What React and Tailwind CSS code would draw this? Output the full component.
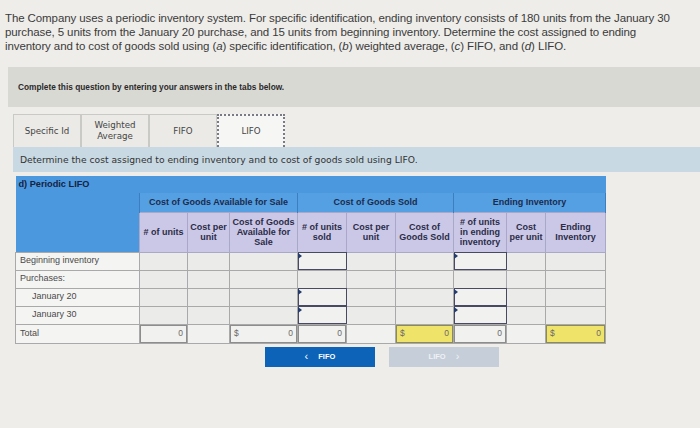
import React from "react";

const COLS = [124, 48, 42, 68, 49, 49, 58, 53, 39, 60];

const ROWS = [
  { label: "Beginning inventory", indent: false, inputs: true },
  { label: "Purchases:", indent: false, inputs: false },
  { label: "January 20", indent: true, inputs: true },
  { label: "January 30", indent: true, inputs: true },
];

const TABS = ["Specific Id", "Weighted Average", "FIFO", "LIFO"];

const SUBHEADS = [
  "# of units",
  "Cost per unit",
  "Cost of Goods Available for Sale",
  "# of units sold",
  "Cost per unit",
  "Cost of Goods Sold",
  "# of units in ending inventory",
  "Cost per unit",
  "Ending Inventory",
];

function Marker() {
  return (
    <span className="absolute left-0 top-0 w-0 h-0 border-t-[3px] border-b-[3px] border-l-[4px] border-t-transparent border-b-transparent border-l-[#233a6b]" />
  );
}

function Cell({ input }) {
  return (
    <td className={`relative h-[18px] p-0 border border-[#a9a9a9] ${input ? "bg-[#f1f1ef] outline outline-1 outline-[#474a62] -outline-offset-1" : "bg-[#ebebe9]"}`}>
      {input && <Marker />}
    </td>
  );
}

function TotalCell({ dollar, value, yellow, boxed = true }) {
  return (
    <td className={`h-[19px] p-0 border border-[#a9a9a9] ${yellow ? "bg-[#efe36a]" : "bg-[#f1f1ef]"}`}>
      {boxed && (
        <div className={`flex h-full items-center justify-between px-[4px] text-[8.5px] text-[#6a6a6a] outline outline-1 -outline-offset-1 ${yellow ? "outline-[#8a8a5a]" : "outline-[#8d8d8d]"}`}>
          <span>{dollar ? "$" : ""}</span>
          <span>{value}</span>
        </div>
      )}
    </td>
  );
}

export default function App() {
  return (
    <div className="w-[700px] h-[428px] overflow-hidden bg-[#eeede9] font-['Liberation_Sans',Arial,sans-serif]">
      <p className="pl-[5px] pt-[11px] text-[11.5px] leading-[14px] tracking-[-0.1px] text-[#3b3b3b]">
        The Company uses a periodic inventory system. For specific identification, ending inventory consists of 180 units from the January 30
        <br />
        purchase, 5 units from the January 20 purchase, and 15 units from beginning inventory. Determine the cost assigned to ending
        <br />
        inventory and to cost of goods sold using (<i>a</i>) specific identification, (<i>b</i>) weighted average, (<i>c</i>) FIFO, and (<i>d</i>) LIFO.
      </p>

      <div className="ml-[8px] mt-[14px] h-[40px] bg-[#d9d9d3] flex items-center pl-[10px]">
        <span className="text-[8.3px] font-bold text-[#2a2a2a]">
          Complete this question by entering your answers in the tabs below.
        </span>
      </div>

      <div className="ml-[13px] mt-[7px] flex h-[33px] font-['DejaVu_Sans',sans-serif] text-[8.7px] text-[#454545]">
        {TABS.map((t, i) => {
          const active = i === 3;
          return (
            <div
              key={t}
              className={`w-[68px] flex items-center justify-center text-center leading-[11px] ${
                active
                  ? "bg-[#f6f6f4] border-2 border-dotted border-[#7a7a86] border-b-0"
                  : "bg-[#ebeae6] border border-[#c9c9c5] border-b-0"
              }`}
            >
              {t === "Weighted Average" ? (
                <span>
                  Weighted
                  <br />
                  Average
                </span>
              ) : (
                t
              )}
            </div>
          );
        })}
      </div>

      <div className="ml-[13px] h-[25px] bg-[#c8d9e3] flex items-center pl-[7px]">
        <span className="font-['DejaVu_Sans',sans-serif] text-[9.2px] text-[#333]">
          Determine the cost assigned to ending inventory and to cost of goods sold using LIFO.
        </span>
      </div>

      <table className="ml-[15px] mt-[4px] border-collapse table-fixed w-[590px]">
        <colgroup>
          {COLS.map((w, i) => (
            <col key={i} style={{ width: w }} />
          ))}
        </colgroup>
        <thead>
          <tr>
            <th colSpan={10} className="h-[17px] p-0 pl-[3px] text-left bg-[#4c98de] text-[#15233f] font-bold text-[9.2px]">
              d) Periodic LIFO
            </th>
          </tr>
          <tr className="text-[#1c2b4d] font-bold text-[9px]">
            <th rowSpan={2} className="bg-[#4c98de] p-0" />
            <th colSpan={3} className="h-[19px] p-0 bg-[#55a0e2] border-x border-[#3b7fc0]">
              Cost of Goods Available for Sale
            </th>
            <th colSpan={3} className="p-0 bg-[#55a0e2] border-x border-[#3b7fc0]">
              Cost of Goods Sold
            </th>
            <th colSpan={3} className="p-0 bg-[#55a0e2] border-x border-[#3b7fc0]">
              Ending Inventory
            </th>
          </tr>
          <tr className="text-[#2c2c48] font-bold leading-[10px]">
            {SUBHEADS.map((h, i) => (
              <th key={i} className="h-[40px] p-0 px-[1px] bg-[#cac8e6] border border-[#a9a8c8] text-[9px]">
                {h}
              </th>
            ))}
          </tr>
        </thead>
        <tbody className="text-[#4a4a4a]">
          {ROWS.map((r) => (
            <tr key={r.label}>
              <td className={`h-[18px] p-0 border border-[#a9a9a9] bg-[#f4f4f2] text-[9px] ${r.indent ? "pl-[16px]" : "pl-[4px]"}`}>
                {r.label}
              </td>
              <Cell />
              <Cell />
              <Cell />
              <Cell input={r.inputs} />
              <Cell />
              <Cell />
              <Cell input={r.inputs} />
              <Cell />
              <Cell />
            </tr>
          ))}
          <tr>
            <td className="h-[19px] p-0 pl-[4px] border border-[#a9a9a9] bg-[#f4f4f2] text-[9px]">Total</td>
            <TotalCell value="0" />
            <TotalCell boxed={false} />
            <TotalCell dollar value="0" />
            <TotalCell value="0" />
            <TotalCell boxed={false} />
            <TotalCell dollar value="0" yellow />
            <TotalCell value="0" />
            <TotalCell boxed={false} />
            <TotalCell dollar value="0" yellow />
          </tr>
        </tbody>
      </table>

      <div className="mt-[3px] flex gap-[14px] pl-[265px]">
        <div className="w-[110px] h-[20px] bg-[#0c63b8] flex items-center justify-center gap-[10px] text-white text-[7.5px] font-bold">
          <span className="text-[11px] font-normal leading-none">&#8249;</span>
          <span>FIFO</span>
        </div>
        <div className="w-[110px] h-[20px] bg-[#c6cfd9] flex items-center justify-center gap-[10px] text-[#eef1f5] text-[7.5px] font-bold">
          <span>LIFO</span>
          <span className="text-[11px] font-normal leading-none">&#8250;</span>
        </div>
      </div>
    </div>
  );
}
